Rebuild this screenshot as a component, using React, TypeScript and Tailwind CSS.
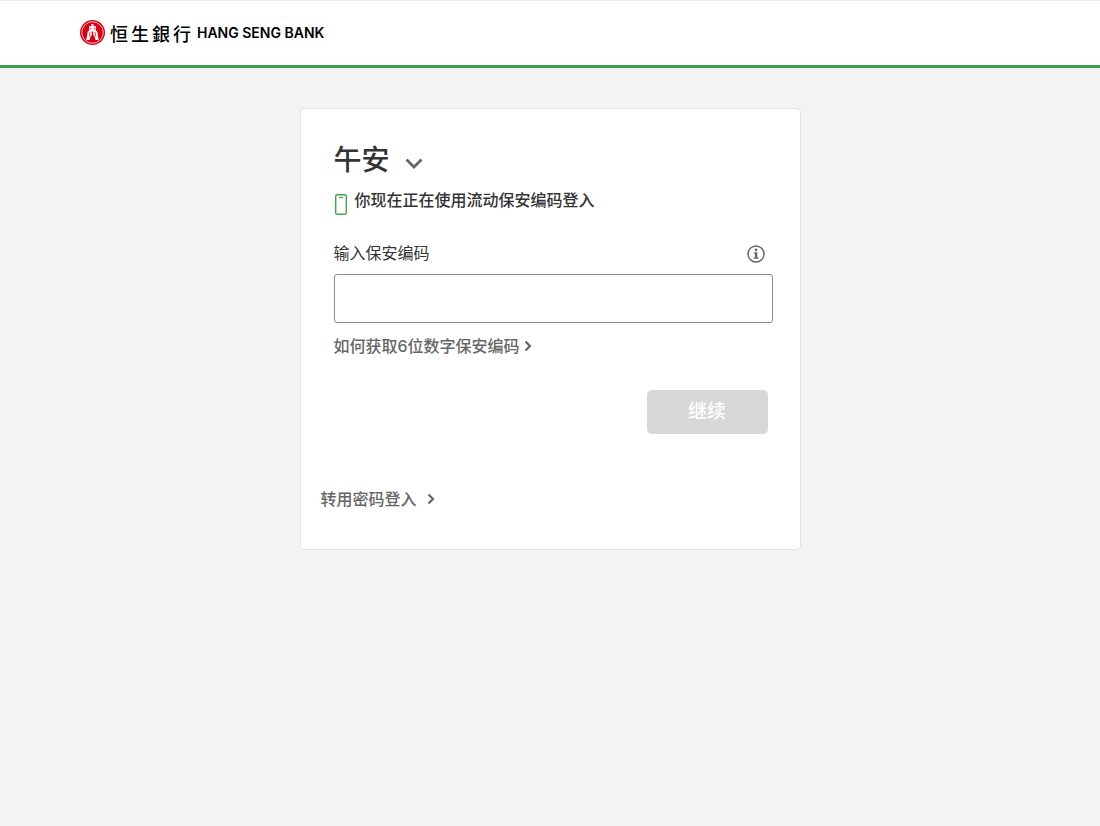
import React, { useState } from "react";

const BRAND_NAME = ["恒", "生", "銀", "行"];

function BankEmblem() {
    return (
        <svg className="h-[25px] w-[25px]" viewBox="0 0 50 50" aria-hidden="true">
            <circle cx="25" cy="25" r="25" fill="#db0011" />
            <circle cx="25" cy="25" r="21.5" fill="none" stroke="#fff" strokeWidth="1.500" />
            {/* spade coin */}
            <path
                fill="#fff"
                d="M23 8h4v4h4.500v9l3 2 3 17H31l-2.500-9h-2v-8h-3v8h-2L19 40h-6.500l3-17 3-2v-9H23z"
            />
            <path
                d="M21.500 15v4M28.500 15v4M20 24l-1.500 9M30 24l1.500 9"
                stroke="#db0011"
                strokeWidth="1.400"
            />
        </svg>
    );
}

function ChevronRight() {
    return (
        <svg className="h-3 w-2" viewBox="0 0 8 12" fill="none" aria-hidden="true">
            <path d="M1.500 1.500L6 6l-4.500 4.500" stroke="#666" strokeWidth="2.200" />
        </svg>
    );
}

function InfoIcon() {
    return (
        <svg className="h-[18px] w-[18px]" viewBox="0 0 18 18" fill="none" aria-hidden="true">
            <circle cx="9" cy="9" r="8" stroke="#666" strokeWidth="1.500" />
            <circle cx="9" cy="4.800" r="1.400" fill="#666" />
            <path d="M6.800 7.200h3.500v5.200h1.200v1.400H6.600v-1.400H8V8.600H6.800z" fill="#666" />
        </svg>
    );
}

function Header() {
    return (
        <header className="border-t border-b-3 border-t-[#ededed] border-b-[#3e9d4c] bg-white">
            <div className="flex h-16 items-start px-20 pt-[19px]">
                <a href="#" className="flex items-center text-black" aria-label="恒生銀行 HANG SENG BANK">
                    <BankEmblem />
                    <span className="ml-[5px] flex gap-[3px] font-['Noto_Sans_CJK_TC',sans-serif] text-lg leading-6 font-medium">
                        {BRAND_NAME.map((char) => (
                            <span key={char}>{char}</span>
                        ))}
                    </span>
                    <span className="ml-1.5 font-['Inter',sans-serif] text-sm leading-6 font-semibold">HANG SENG BANK</span>
                </a>
            </div>
        </header>
    );
}

export default function App() {
    const [code, setCode] = useState("");

    return (
        <div className="min-h-screen bg-[#f3f3f3] font-['Inter','Noto_Sans_CJK_SC',sans-serif] text-[#333]">
            <Header />

            <main className="px-4 pt-10 pb-10">
                <div className="mx-auto w-full max-w-[501px] rounded border border-[#e3e3e3] bg-white pb-[38px]">
                    <form className="pt-[31px] pr-[27px] pl-[33px]" onSubmit={(e) => e.preventDefault()}>
                        {/* Greeting */}
                        <button type="button" className="flex items-center gap-[15px] text-[28px] leading-10 font-medium">
                            <h1>午安</h1>
                            <svg className="mt-2 h-3 w-[18px]" viewBox="0 0 18 12" fill="none" aria-hidden="true">
                                <path d="M1.500 1.500L9 9l7.500-7.500" stroke="#666" strokeWidth="2.800" />
                            </svg>
                        </button>

                        <div className="mt-2 flex gap-2">
                            <svg className="mt-1.5 ml-px h-[21px] w-3" viewBox="0 0 12 21" fill="none" aria-hidden="true">
                                <rect x="0.700" y="0.700" width="10.600" height="19.600" rx="1.600" stroke="#3fa74b" strokeWidth="1.400" />
                                <path d="M4 3.500h4" stroke="#3fa74b" strokeWidth="1.200" />
                            </svg>
                            <p className="text-base leading-6 font-medium">你现在正在使用流动保安编码登入</p>
                        </div>

                        {/* Security code */}
                        <div className="mt-[26px] flex items-end justify-between pr-2">
                            <label htmlFor="security-code" className="text-base leading-6">输入保安编码</label>
                            <button type="button" aria-label="保安编码" className="pb-0.5">
                                <InfoIcon />
                            </button>
                        </div>
                        <input
                            id="security-code"
                            type="text"
                            inputMode="numeric"
                            maxLength={6}
                            value={code}
                            onChange={(e) => setCode(e.target.value)}
                            className="mt-[9px] block h-[49px] w-full rounded-[3px] border border-[#8c8c8c] bg-white px-3 text-base outline-none focus:border-[#333]"
                        />
                        <a href="#" className="mt-[11px] inline-flex items-center gap-1 text-base leading-6 font-medium text-[#666]">
                            如何获取6位数字保安编码
                            <ChevronRight />
                        </a>

                        <div className="mt-8 flex justify-end pr-[5px]">
                            <button
                                type="submit"
                                disabled={code.length < 6}
                                className="h-11 w-[121px] rounded-[5px] bg-[#3e9d4c] text-[19px] font-medium text-white disabled:bg-[#d8d8d8]"
                            >
                                继续
                            </button>
                        </div>
                    </form>

                    <div className="mt-[53px] px-5">
                        <a href="#" className="inline-flex items-center gap-2.5 text-base leading-6 font-medium text-[#666]">
                            转用密码登入
                            <ChevronRight />
                        </a>
                    </div>
                </div>
            </main>
        </div>
    );
}
